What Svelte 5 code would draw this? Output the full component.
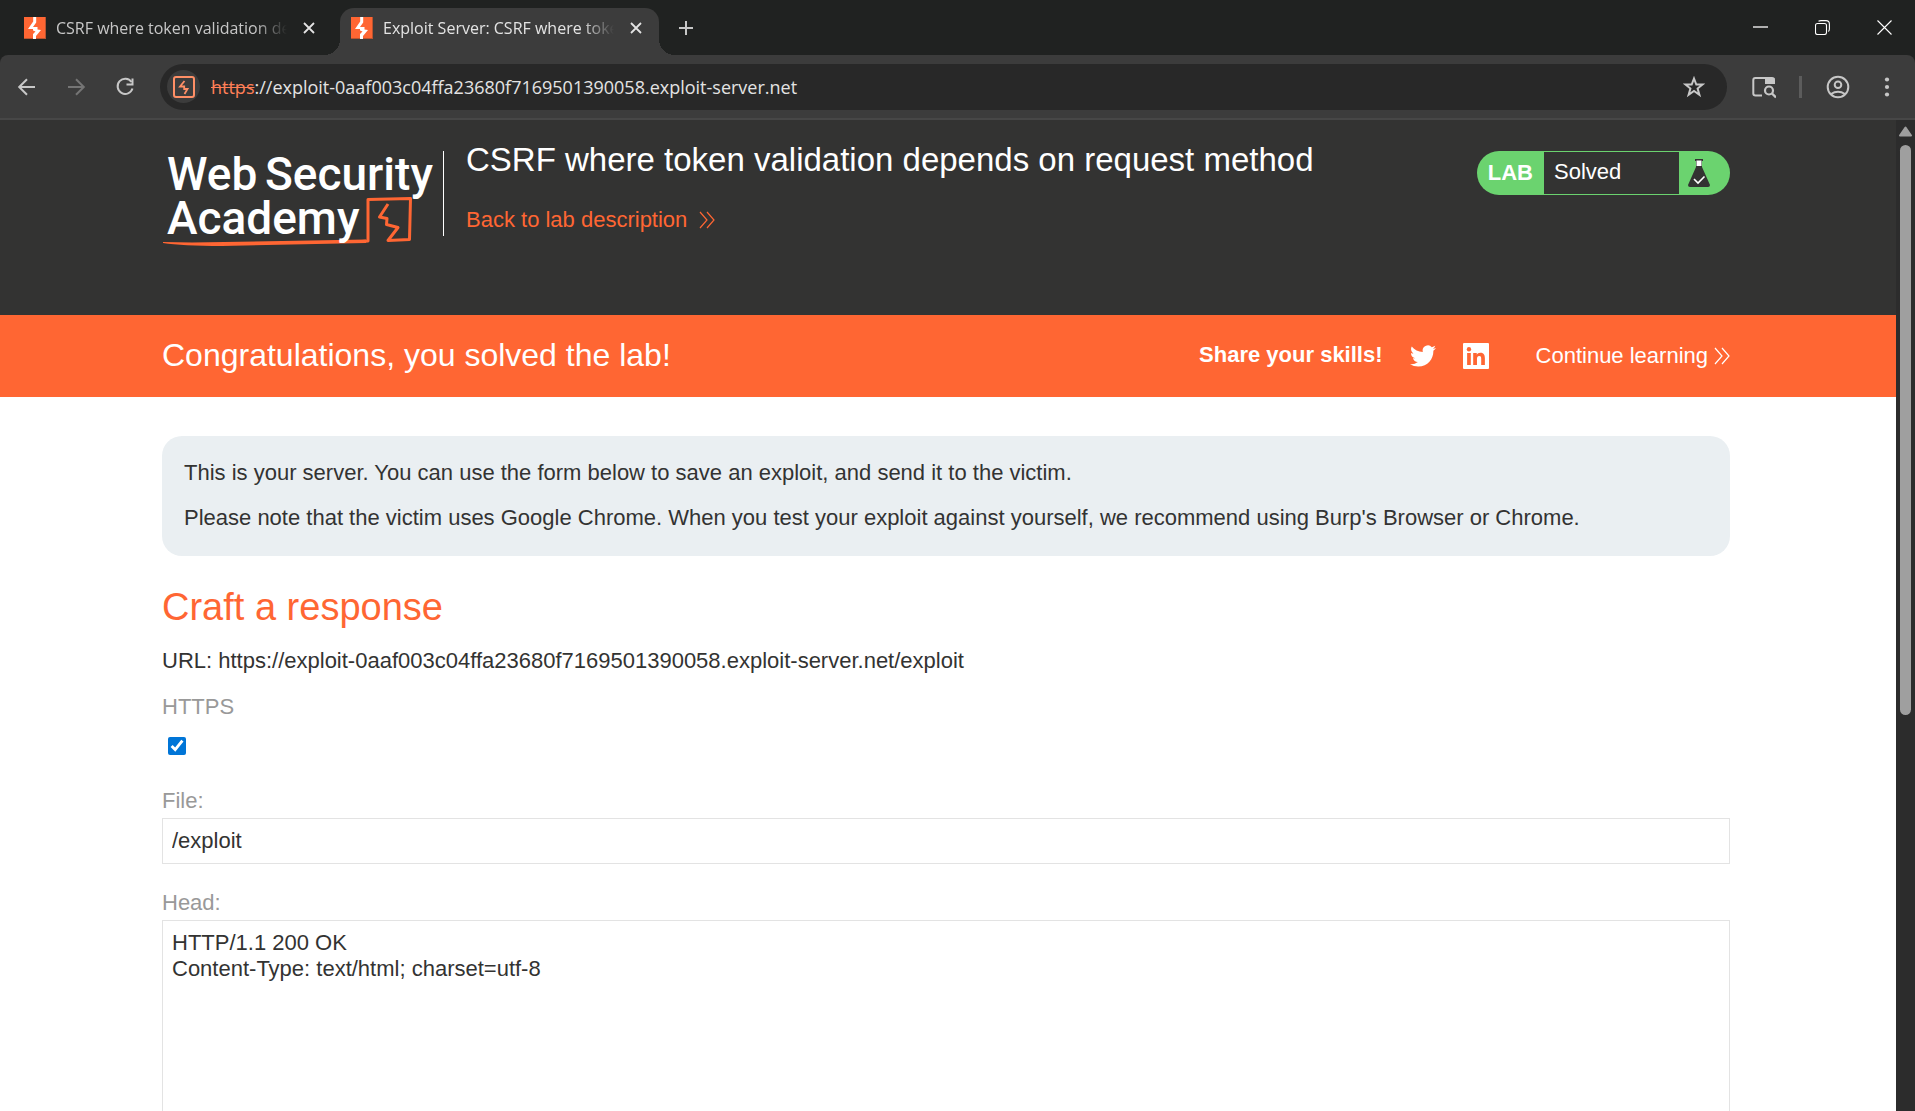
<script>
  const tabs = [
    { title: 'CSRF where token validation de', active: false },
    { title: 'Exploit Server: CSRF where toke', active: true }
  ];

  let address = $state('://exploit-0aaf003c04ffa23680f7169501390058.exploit-server.net');
  let https = $state(true);
  let file = $state('/exploit');
  let head = $state('HTTP/1.1 200 OK\nContent-Type: text/html; charset=utf-8');
</script>

{#snippet chevrons()}
  <svg class="chevrons" viewBox="0 0 16 18" aria-hidden="true">
    <path d="M1 1l7 8-7 8M8 1l7 8-7 8" fill="none" stroke="currentColor" stroke-width="1.2" />
  </svg>
{/snippet}

<div class="browser">
  <header class="strip">
    <div class="tabs" role="tablist">
      {#each tabs as tab}
        <div class="tab" class:active={tab.active} role="tab" tabindex="0" aria-selected={tab.active}>
          <svg class="favicon" viewBox="0 0 22 22" aria-hidden="true">
            <rect width="22" height="22" fill="#ff6633" />
            <path d="M0 21.500h22M21.500 0v22" stroke="#b9532f" fill="none" />
            <path d="M9.200 0h3v5.500L9 10h4.500v2.500L17 13l-5 6v3H9v-5l2.500-2.500L9 13.500V12H4l5.200-7.500z" fill="#fff" />
          </svg>
          <span class="tab-title">{tab.title}</span>
          <button class="tab-close" aria-label="Close tab">
            <svg viewBox="0 0 12 12"><path d="M1 1l10 10M11 1L1 11" stroke="currentColor" stroke-width="1.800" /></svg>
          </button>
        </div>
      {/each}
    </div>
    <button class="new-tab" aria-label="New tab">
      <svg viewBox="0 0 14 14"><path d="M7 0v14M0 7h14" stroke="currentColor" stroke-width="2" /></svg>
    </button>
    <div class="window-controls">
      <button aria-label="Minimize">
        <svg viewBox="0 0 15 15"><path d="M0 7h15" stroke="#b0b0b0" stroke-width="2" /></svg>
      </button>
      <button aria-label="Restore">
        <svg viewBox="0 0 15 15" fill="none" stroke="#fff" stroke-width="1.100">
          <rect x=".5" y="3.500" width="11" height="11" rx="2" />
          <path d="M3.500 1.200Q4.500.6 6 .6h5Q14.400.6 14.400 4v5q0 1.500-1 2.500" />
        </svg>
      </button>
      <button aria-label="Close">
        <svg viewBox="0 0 15 15"><path d="M.5.5l14 14M14.500.5l-14 14" stroke="#fff" stroke-width="1.100" /></svg>
      </button>
    </div>
  </header>

  <nav class="toolbar" aria-label="Browser">
    <button class="tool" aria-label="Back">
      <svg viewBox="0 0 24 24"><path d="M20 12H4.500M12 4.200L4.200 12l7.800 7.800" fill="none" stroke="currentColor" stroke-width="2" /></svg>
    </button>
    <button class="tool" aria-label="Forward" disabled>
      <svg viewBox="0 0 24 24"><path d="M4 12h15.500M12 4.200l7.800 7.800-7.800 7.800" fill="none" stroke="currentColor" stroke-width="2" /></svg>
    </button>
    <button class="tool" aria-label="Reload">
      <svg viewBox="0 0 24 24" fill="none" stroke="currentColor" stroke-width="2">
        <path d="M18.500 7A7.600 7.600 0 1 0 19.500 13.500" /><path d="M19.500 3.500v6h-6" />
      </svg>
    </button>
    <form class="omnibox">
      <button class="site-info" type="button" aria-label="View site information">
        <svg viewBox="0 0 22 22" fill="none" stroke="#ff8f66">
          <rect x="1" y="1" width="20" height="20" rx="2" stroke-width="2" />
          <path d="M11.500 5L7 10.500h4.200V13H14.500L11.500 18" stroke-width="1.800" />
        </svg>
      </button>
      <span class="scheme">https</span>
      <input type="text" aria-label="Address" spellcheck="false" bind:value={address} />
      <button class="star" type="button" aria-label="Bookmark this tab">
        <svg viewBox="0 0 22 22">
          <path d="M11 2.500l2.300 6h6.200l-4.900 4 1.800 6.300L11 15l-5.400 3.800 1.800-6.300-4.900-4h6.200z" fill="none" stroke="currentColor" stroke-width="2" />
        </svg>
      </button>
    </form>
    <button class="tool" aria-label="Search tabs">
      <svg viewBox="0 0 24 24" fill="none" stroke="currentColor">
        <path d="M10 20.500H3.500Q1.300 20.500 1.300 18.500V5q0-2 2-2H20q2 0 2 2v4" stroke-width="2" />
        <path d="M13 3h9.500v6H13z" fill="currentColor" stroke="none" />
        <circle cx="17" cy="15.500" r="4" stroke-width="2.200" />
        <path d="M20 18.500l4 4" stroke-width="2.400" />
      </svg>
    </button>
    <span class="separator"></span>
    <button class="tool" aria-label="Profile">
      <svg viewBox="0 0 24 24" fill="none" stroke="currentColor" stroke-width="2">
        <circle cx="12" cy="12" r="10.300" /><circle cx="12" cy="9.800" r="3.300" />
        <path d="M5 19q7-4.500 14 0" />
      </svg>
    </button>
    <button class="tool" aria-label="Menu">
      <svg viewBox="0 0 24 24" fill="currentColor">
        <circle cx="12" cy="4.500" r="2.100" /><circle cx="12" cy="12" r="2.100" /><circle cx="12" cy="19.500" r="2.100" />
      </svg>
    </button>
  </nav>

  <div class="viewport">
    <div class="page">
      <section class="academy wrap">
        <a class="logo" href="/" aria-label="Web Security Academy">
          <svg viewBox="0 0 276 106">
            <path d="M200 96.500L206 96V54.500L248.500 53.500L247.500 94.500L226 95.500L236 82.500L224.500 79.500L225 73.500L217.500 72L226 59" fill="none" stroke="#ff6633" stroke-width="3" stroke-linejoin="round" />
            <path d="M1 97L30 97.500L204 94.500V98L60 101Q20 101 1 98z" fill="#ff6633" />
            <text x="5" y="45">Web</text>
            <text x="103" y="45">Security</text>
            <text x="5" y="89">Academy</text>
          </svg>
        </a>
        <div class="heading">
          <h2>CSRF where token validation depends on request method</h2>
          <a class="back" href="#description">Back to lab description {@render chevrons()}</a>
        </div>
        <div class="status">
          <span class="lab">LAB</span>
          <span class="solved">Solved</span>
          <svg class="flask" viewBox="0 0 24 30" aria-hidden="true">
            <path d="M8 1h8v2h-1v6l8 18q0 2-2 2H3q-2 0-2-2L9 9V3H8z" fill="#333332" />
            <path d="M9.500 2.500h5V8h-5z" fill="#fff" />
            <path d="M7 21l4 4 6.500-6.500" fill="none" stroke="#fff" stroke-width="1.600" />
          </svg>
        </div>
      </section>

      <section class="banner wrap">
        <h4>Congratulations, you solved the lab!</h4>
        <span class="share">Share your skills!</span>
        <a class="social" href="#twitter" aria-label="Share on Twitter">
          <svg viewBox="0 0 24 24"><path fill="currentColor" d="M23.950 4.570a10 10 0 0 1-2.820.78 4.960 4.960 0 0 0 2.160-2.730c-.95.56-2 .96-3.130 1.190a4.920 4.920 0 0 0-8.380 4.480C7.690 8.090 4.070 6.130 1.640 3.160a4.820 4.820 0 0 0-.67 2.480c0 1.710.87 3.210 2.190 4.100a4.900 4.900 0 0 1-2.230-.62v.06a4.920 4.920 0 0 0 3.950 4.830 5 5 0 0 1-2.210.08 4.940 4.940 0 0 0 4.600 3.420A9.870 9.870 0 0 1 0 19.540a13.990 13.990 0 0 0 7.550 2.210c9.050 0 14-7.500 14-13.990 0-.21 0-.42-.02-.63a9.940 9.940 0 0 0 2.460-2.550z" /></svg>
        </a>
        <a class="social" href="#linkedin" aria-label="Share on LinkedIn">
          <svg viewBox="0 0 24 24">
            <rect width="24" height="24" rx="1" fill="currentColor" />
            <circle cx="5.500" cy="5.800" r="2" fill="#ff6633" />
            <path d="M3.800 9.300h3.400v11H3.800zM9.400 9.300h3.300v1.500c.5-.9 1.600-1.800 3.300-1.800 3.500 0 4.200 2.300 4.200 5.300v6h-3.400V15c0-1.300 0-2.900-1.800-2.900s-2.100 1.400-2.100 2.800v5.400H9.400z" fill="#ff6633" />
          </svg>
        </a>
        <a class="continue" href="#next">Continue learning {@render chevrons()}</a>
      </section>

      <main class="content wrap">
        <div class="info">
          <p>This is your server. You can use the form below to save an exploit, and send it to the victim.</p>
          <p>Please note that the victim uses Google Chrome. When you test your exploit against yourself, we recommend using Burp's Browser or Chrome.</p>
        </div>
        <h3>Craft a response</h3>
        <form class="craft">
          <p>URL: https://exploit-0aaf003c04ffa23680f7169501390058.exploit-server.net/exploit</p>
          <label for="https">HTTPS</label>
          <input id="https" type="checkbox" bind:checked={https} />
          <label for="file">File:</label>
          <input id="file" type="text" bind:value={file} />
          <label for="head">Head:</label>
          <textarea id="head" rows="12" spellcheck="false" bind:value={head}></textarea>
        </form>
      </main>
    </div>
    <div class="scrollbar" aria-hidden="true">
      <svg viewBox="0 0 13 11"><path d="M6.500 1.500L12 9.500H1z" fill="#9f9f9f" stroke="#9f9f9f" stroke-width="2" stroke-linejoin="round" /></svg>
      <div class="track"><div class="thumb"></div></div>
    </div>
  </div>
</div>

<style>
  :global(body) {
    margin: 0;
    background: #202221;
  }
  .browser {
    display: flex;
    flex-direction: column;
    height: 100vh;
    overflow: hidden;
    background: #202221;
    color: #333332;
    font: 22px "Liberation Sans", Arial, sans-serif;
  }
  button {
    display: grid;
    place-items: center;
    flex: none;
    padding: 0;
    border: 0;
    background: none;
    color: inherit;
  }
  svg {
    display: block;
    flex: none;
  }
  a {
    color: inherit;
    text-decoration: none;
  }
  h2, h3, h4, p {
    margin: 0;
    font-weight: 400;
  }

  /* Tab strip */
  .strip {
    display: flex;
    flex: none;
    height: 55px;
    padding-left: 13px;
    color: #e3e3e3;
    font: 16px "Open Sans", "Noto Sans", sans-serif;
  }
  .tabs {
    display: flex;
    align-items: end;
    gap: 8px;
  }
  .tab {
    position: relative;
    display: flex;
    align-items: center;
    box-sizing: border-box;
    width: 319px;
    height: 47px;
    padding: 0 11px 8px;
    border-radius: 14px 14px 0 0;
    color: #c7c7c7;
  }
  .tab.active {
    background: #3c3c3c;
    color: #e3e3e3;
  }
  .tab.active::before,
  .tab.active::after {
    content: "";
    position: absolute;
    bottom: 0;
    width: 16px;
    height: 16px;
  }
  .tab.active::before {
    right: 100%;
    background: radial-gradient(circle at 0 0, transparent 16px, #3c3c3c 16px);
  }
  .tab.active::after {
    left: 100%;
    background: radial-gradient(circle at 100% 0, transparent 16px, #3c3c3c 16px);
  }
  .favicon {
    width: 22px;
    height: 22px;
  }
  .tab-title {
    flex: 1;
    min-width: 0;
    margin-left: 10px;
    overflow: hidden;
    white-space: nowrap;
    mask-image: linear-gradient(to left, transparent, #000 32px);
  }
  .tab-close {
    width: 24px;
    height: 24px;
    margin-left: 10px;
    color: #e3e3e3;
  }
  .tab-close svg {
    width: 12px;
    height: 12px;
  }
  .new-tab {
    width: 54px;
    height: 55px;
    color: #c7c7c7;
  }
  .new-tab svg {
    width: 14px;
    height: 14px;
  }
  .window-controls {
    display: flex;
    margin-left: auto;
  }
  .window-controls button {
    width: 62px;
    height: 54px;
  }
  .window-controls svg {
    width: 15px;
    height: 15px;
  }

  /* Toolbar */
  .toolbar {
    display: flex;
    flex: none;
    align-items: center;
    box-sizing: border-box;
    height: 65px;
    padding: 0 4px 0 2px;
    border-bottom: 2px solid #474747;
    border-radius: 8px 8px 0 0;
    background: #3c3c3c;
    color: #c7c7c7;
  }
  .tool {
    width: 49px;
    height: 46px;
  }
  .tool:disabled {
    color: #757575;
  }
  .tool svg {
    width: 24px;
    height: 24px;
  }
  .omnibox {
    display: flex;
    flex: 1;
    align-items: center;
    height: 46px;
    margin: 0 12px 0 11px;
    border-radius: 23px;
    background: #282828;
    font: 18px "Open Sans", "Noto Sans", sans-serif;
  }
  .site-info {
    width: 33px;
    height: 33px;
    margin: 0 11px 0 7px;
    border-radius: 50%;
    background: #3c3c3c;
  }
  .site-info svg,
  .star svg {
    width: 22px;
    height: 22px;
  }
  .scheme {
    color: #ff7f57;
    text-decoration: line-through;
  }
  .omnibox input {
    flex: 1;
    min-width: 0;
    padding: 0;
    border: 0;
    outline: 0;
    background: none;
    color: #e3e3e3;
    font: inherit;
  }
  .star {
    width: 46px;
    height: 46px;
    margin-right: 10px;
  }
  .separator {
    width: 3px;
    height: 22px;
    margin: 0 11px;
    background: #5c5c5c;
  }

  /* Page */
  .viewport {
    display: flex;
    flex: 1;
    min-height: 0;
  }
  .page {
    flex: 1;
    min-width: 0;
    overflow: hidden;
    background: #fff;
  }
  .wrap {
    padding-right: 166px;
    padding-left: 162px;
  }
  .chevrons {
    width: 16px;
    height: 18px;
  }
  .academy {
    display: flex;
    align-items: start;
    box-sizing: border-box;
    height: 195px;
    background: #333332;
    color: #fff;
  }
  .logo {
    margin: 25px 5px 0 0;
  }
  .logo svg {
    width: 276px;
    height: 106px;
  }
  .logo text {
    fill: #fff;
    font: 500 46px Roboto, sans-serif;
  }
  .heading {
    flex: 1;
    height: 85px;
    margin-top: 31px;
    padding-left: 22px;
    border-left: 1px solid #fff;
  }
  .heading h2 {
    margin-top: -10px;
    font-size: 33px;
    line-height: 38px;
  }
  .back {
    display: flex;
    align-items: center;
    gap: 12px;
    margin-top: 28px;
    color: #ff6633;
    line-height: 26px;
  }
  .status {
    display: flex;
    align-items: center;
    box-sizing: border-box;
    height: 44px;
    margin-top: 31px;
    padding: 1px 19px 1px 11px;
    border-radius: 22px;
    background: #6bd36f;
  }
  .lab {
    margin-right: 11px;
    font-weight: 700;
  }
  .solved {
    box-sizing: border-box;
    width: 135px;
    height: 42px;
    margin-right: 8px;
    padding-left: 10px;
    background: #333332;
    line-height: 40px;
  }
  .flask {
    width: 24px;
    height: 30px;
  }
  .banner {
    display: flex;
    align-items: center;
    height: 82px;
    background: #ff6633;
    color: #fff;
  }
  .banner h4 {
    flex: 1;
    padding-bottom: 2px;
    font-size: 32px;
  }
  .share {
    margin-right: 27px;
    padding-bottom: 2px;
    font-weight: 700;
  }
  .social {
    margin-right: 27px;
  }
  .social svg {
    width: 26px;
    height: 26px;
  }
  .continue {
    display: flex;
    align-items: center;
    gap: 6px;
    margin-left: 20px;
  }
  .content {
    padding-top: 39px;
  }
  .info {
    display: grid;
    gap: 19px;
    padding: 24px 22px 25px;
    border-radius: 20px;
    background: #eaeff2;
    line-height: 26px;
  }
  h3 {
    margin-top: 30px;
    color: #ff6633;
    font-size: 38px;
    line-height: 42px;
  }
  .craft {
    display: flex;
    flex-direction: column;
    line-height: 26px;
  }
  .craft p {
    margin: 20px 0;
  }
  .craft label {
    color: #999;
  }
  .craft input[type="checkbox"] {
    width: 18px;
    height: 18px;
    margin: 17px 0 33px 6px;
    accent-color: #0075d7;
  }
  .craft input[type="text"],
  .craft textarea {
    box-sizing: border-box;
    width: 100%;
    margin: 4px 0 26px;
    padding: 9px;
    border: 1px solid #e3e3e3;
    border-radius: 0;
    outline: 0;
    background: #fff;
    color: #333332;
    font: inherit;
    resize: none;
  }
  .scrollbar {
    display: flex;
    flex-direction: column;
    flex: none;
    align-items: center;
    width: 19px;
    padding-top: 6px;
    background: #2c2c2c;
  }
  .scrollbar svg {
    width: 13px;
    height: 11px;
  }
  .track {
    flex: 1;
    width: 11px;
    margin-top: 8px;
  }
  .thumb {
    height: 59%;
    border-radius: 6px;
    background: #9f9f9f;
  }
</style>
